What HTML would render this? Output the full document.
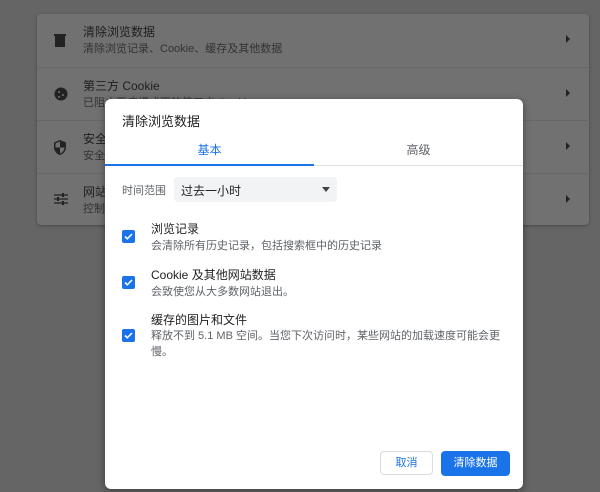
<html><head><style>
body{margin:0;width:600px;height:492px;background:#656565;font-family:"Liberation Sans","Noto Sans CJK SC",sans-serif;position:relative;overflow:hidden}
.card{position:absolute;left:37px;top:14px;width:552px;height:211px;background:#717171;border-radius:4px;box-shadow:0 1px 3px rgba(0,0,0,.3)}
.row{position:absolute;left:0;width:552px;height:53px;border-top:1px solid #686868}
.row .t{position:absolute;left:46px;top:9px;font-size:12px;color:#1e1e1e}
.row .s{position:absolute;left:46px;top:26px;font-size:11px;color:#333}
.row .a{position:absolute;right:19px;top:21px;width:0;height:0;border-left:4px solid #222;border-top:4px solid transparent;border-bottom:4px solid transparent}
.ic{position:absolute;left:17px;top:19px}
.dlg{position:absolute;left:105px;top:99px;width:418px;height:390px;background:#fff;border-radius:6px;box-shadow:0 2px 8px rgba(0,0,0,.4)}
.abs{position:absolute}
.cb{position:absolute;left:17px;width:13px;height:13px;background:#1a73e8;border-radius:2px}
.cb svg{position:absolute;left:1px;top:1px}
.lt{position:absolute;left:46px;font-size:12px;color:#222}
.ls{position:absolute;left:46px;font-size:11px;color:#5f6368}
</style></head><body>
<div class="card">
 <div class="row" style="top:0;border-top:none"><svg class="ic" width="12" height="14" viewBox="0 0 12 14"><rect x="1" y="3" width="10" height="11" fill="#222"/><rect x="0" y="1" width="12" height="2" fill="#222"/></svg><div class="t">清除浏览数据</div><div class="s">清除浏览记录、Cookie、缓存及其他数据</div><div class="a"></div></div>
 <div class="row" style="top:53px"><svg class="ic" width="14" height="14"><circle cx="7" cy="7" r="6.5" fill="#222"/><circle cx="5" cy="5" r="1" fill="#717171"/><circle cx="9" cy="8" r="1" fill="#717171"/><circle cx="5" cy="10" r="1" fill="#717171"/></svg><div class="t">第三方 Cookie</div><div class="s">已阻止无痕模式下的第三方 Cookie</div><div class="a"></div></div>
 <div class="row" style="top:106px"><svg class="ic" width="12" height="15" viewBox="0 0 12 15"><path d="M6 0L0 2.5V7c0 4 2.6 7 6 8 3.4-1 6-4 6-8V2.5z" fill="#222"/><path d="M6 1.5v6H1.5V3.3zM6 7.5h4.5C10.3 10.5 8.4 12.8 6 13.5z" fill="#717171"/></svg><div class="t">安全</div><div class="s">安全</div><div class="a"></div></div>
 <div class="row" style="top:159px"><svg class="ic" width="14" height="12"><path d="M0 2h14M0 6h14M0 10h14" stroke="#222" stroke-width="1.3"/><rect x="8" y="0" width="2" height="4" fill="#222"/><rect x="3" y="4" width="2" height="4" fill="#222"/><rect x="8" y="8" width="2" height="4" fill="#222"/></svg><div class="t">网站</div><div class="s">控制</div><div class="a"></div></div>
</div>
<div class="dlg">
 <div class="abs" style="left:17px;top:12px;font-size:13px;color:#222">清除浏览数据</div>
 <div class="abs" style="left:0;top:42px;width:209px;text-align:center;font-size:12px;color:#1a73e8">基本</div>
 <div class="abs" style="left:209px;top:42px;width:209px;text-align:center;font-size:12px;color:#5f6368">高级</div>
 <div class="abs" style="left:0;top:66px;width:418px;height:1px;background:#e0e0e0"></div>
 <div class="abs" style="left:0;top:65px;width:209px;height:2px;background:#1a73e8"></div>
 <div class="abs" style="left:17px;top:83px;font-size:11px;color:#5f6368">时间范围</div>
 <div class="abs" style="left:69px;top:78px;width:163px;height:25px;background:#f1f3f4;border-radius:4px"><span class="abs" style="left:7px;top:5px;font-size:12px;color:#222">过去一小时</span><span class="abs" style="left:148px;top:10px;border-top:5px solid #444;border-left:4.5px solid transparent;border-right:4.5px solid transparent"></span></div>
 <div class="cb" style="top:131px"><svg width="11" height="11"><path d="M2 5.5l2.3 2.3L9 3" stroke="#fff" stroke-width="1.6" fill="none"/></svg></div>
 <div class="lt" style="top:121px">浏览记录</div><div class="ls" style="top:138px">会清除所有历史记录，包括搜索框中的历史记录</div>
 <div class="cb" style="top:177px"><svg width="11" height="11"><path d="M2 5.5l2.3 2.3L9 3" stroke="#fff" stroke-width="1.6" fill="none"/></svg></div>
 <div class="lt" style="top:167px">Cookie 及其他网站数据</div><div class="ls" style="top:184px">会致使您从大多数网站退出。</div>
 <div class="cb" style="top:230px"><svg width="11" height="11"><path d="M2 5.5l2.3 2.3L9 3" stroke="#fff" stroke-width="1.6" fill="none"/></svg></div>
 <div class="lt" style="top:212px">缓存的图片和文件</div><div class="ls" style="top:229px;width:350px;line-height:16px">释放不到 5.1 MB 空间。当您下次访问时，某些网站的加载速度可能会更慢。</div>
 <div class="abs" style="left:275px;top:352px;width:53px;height:24px;border:1px solid #dadce0;border-radius:4px;box-sizing:border-box;text-align:center;line-height:22px;font-size:11px;color:#1a73e8">取消</div>
 <div class="abs" style="left:336px;top:352px;width:69px;height:25px;background:#1a73e8;border-radius:4px;text-align:center;line-height:25px;font-size:11px;color:#fff">清除数据</div>
</div>
</body></html>
